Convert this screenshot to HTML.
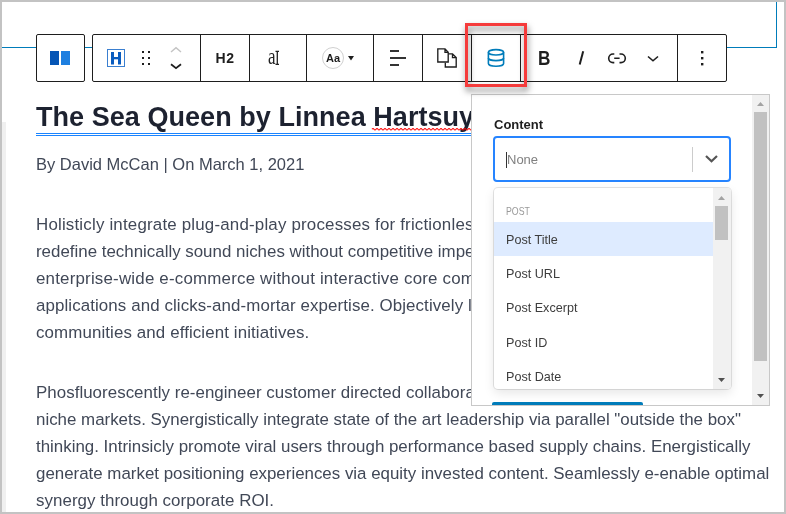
<!DOCTYPE html>
<html><head><meta charset="utf-8">
<style>
*{margin:0;padding:0;box-sizing:border-box}
html,body{width:786px;height:514px;overflow:hidden;background:#fff}
body{position:relative;font-family:"Liberation Sans",sans-serif;-webkit-font-smoothing:antialiased}
body{will-change:transform}
.a{position:absolute}
#frame{left:0;top:0;width:786px;height:514px;border:2px solid #c3c3c3;z-index:50;pointer-events:none}
#strip{left:2px;top:122px;width:4px;height:390px;background:#f0f0f0}
#bl1{left:2px;top:47px;width:775px;height:1px;background:#007cba}
#bl2{left:776px;top:2px;width:1px;height:46px;background:#007cba}
.tb{background:#fff;border:1px solid #1e1e1e;border-radius:2px;height:48px;top:34px}
.sep{top:34px;width:1px;height:48px;background:#1e1e1e}
.lb{left:12px;font-size:12.6px;line-height:18px;color:#3d3d3d;white-space:nowrap}
.txt{white-space:nowrap;color:#414857}
</style></head><body>
<div class="a" id="frame"></div>
<div class="a" id="strip"></div>
<div class="a" id="bl1"></div>
<div class="a" id="bl2"></div>

<!-- toolbar -->
<div class="a tb" style="left:36px;width:49px"></div>
<div class="a tb" style="left:92px;width:635px"></div>
<div class="a sep" style="left:200px"></div>
<div class="a sep" style="left:249px"></div>
<div class="a sep" style="left:306px"></div>
<div class="a sep" style="left:373px"></div>
<div class="a sep" style="left:422px"></div>
<div class="a sep" style="left:471px"></div>
<div class="a sep" style="left:520px"></div>
<div class="a sep" style="left:677px"></div>


<!-- toolbar icons -->
<div class="a" style="left:50px;top:51px;width:9px;height:14px;background:#0555b5"></div>
<div class="a" style="left:61px;top:51px;width:9px;height:14px;background:#1e7fe0"></div>
<svg class="a" style="left:100px;top:40px" width="100" height="36" viewBox="100 40 100 36">
 <rect x="107.5" y="49.5" width="17" height="17" fill="none" stroke="#3a7fd0" stroke-width="1"/>
 <rect x="111" y="52" width="3" height="12.5" fill="#0a5cbf"/>
 <rect x="118" y="52" width="3" height="12.5" fill="#0a5cbf"/>
 <rect x="113" y="57" width="6" height="2.3" fill="#0a5cbf"/>
 <g fill="#1e1e1e">
 <rect x="142" y="51" width="2" height="2"/><rect x="148" y="51" width="2" height="2"/>
 <rect x="142" y="57" width="2" height="2"/><rect x="148" y="57" width="2" height="2"/>
 <rect x="142" y="63" width="2" height="2"/><rect x="148" y="63" width="2" height="2"/>
 </g>
 <path d="M171 52 L176 47.8 L181 52" fill="none" stroke="#c4c4c4" stroke-width="1.5"/>
 <path d="M171 64.2 L176 68.1 L181 64.2" fill="none" stroke="#1e1e1e" stroke-width="1.8"/>
</svg>
<div class="a" style="left:201px;top:34px;width:48px;height:48px;line-height:48px;text-align:center;font-weight:bold;font-size:14px;letter-spacing:.6px;color:#1e1e1e">H2</div>
<div class="a" style="left:268px;top:43px;font-family:'Liberation Serif',serif;font-size:23px;line-height:28px;color:#222;transform:scaleX(.74);transform-origin:0 0">a</div>
<svg class="a" style="left:270px;top:48px" width="14" height="20" viewBox="270 48 14 20">
 <path d="M275.5 51.3 H279 M277.3 51.3 V64.3 M275.5 64.3 H279" fill="none" stroke="#222" stroke-width="1.3"/>
</svg>
<svg class="a" style="left:315px;top:40px" width="50" height="36" viewBox="315 40 50 36">
 <circle cx="333" cy="58" r="10.5" fill="none" stroke="#d0d0d0" stroke-width="1"/>
 <path d="M348 56 H354 L351 60.5 Z" fill="#1e1e1e"/>
</svg>
<div class="a" style="left:313px;top:46px;width:40px;text-align:center;font-weight:bold;font-size:11px;line-height:24px;color:#1e1e1e">Aa</div>
<svg class="a" style="left:380px;top:40px" width="90" height="36" viewBox="380 40 90 36">
 <g fill="#333"><rect x="390" y="50" width="9" height="2"/><rect x="390" y="57" width="16" height="2"/><rect x="390" y="64" width="9" height="2"/></g>
 <path d="M437.8 48.8 H445 L448.2 52.3 V62 H437.8 Z M445 48.8 V52.3 H448.2" fill="none" stroke="#1e1e1e" stroke-width="1.35" stroke-linejoin="miter"/>
 <path d="M448.2 53.9 H452.5 L456.2 57.6 V67 H445.3 V62.8 M452.5 53.9 V57.6 H456.2" fill="none" stroke="#1e1e1e" stroke-width="1.35"/>
</svg>
<svg class="a" style="left:480px;top:40px" width="40" height="36" viewBox="480 40 40 36">
 <g fill="none" stroke="#007cba" stroke-width="1.6">
 <ellipse cx="496" cy="52.3" rx="7.6" ry="2.7"/>
 <path d="M488.4 52.3 V63.6 A7.6 2.7 0 0 0 503.6 63.6 V52.3"/>
 <path d="M488.4 57.9 A7.6 2.7 0 0 0 503.6 57.9"/>
 </g>
</svg>
<div class="a" style="left:538px;top:44px;font-weight:bold;font-size:20px;line-height:28px;color:#1e1e1e;transform:scaleX(.86);transform-origin:0 0">B</div>
<svg class="a" style="left:570px;top:40px" width="150" height="36" viewBox="570 40 150 36">
 <path d="M583.2 51.3 L579.7 64.5" fill="none" stroke="#1e1e1e" stroke-width="2"/>
 <path d="M614.3 54 H613 A4.3 4.3 0 0 0 613 62.6 H614.3 M619.5 54 H621 A4.3 4.3 0 0 1 621 62.6 H619.5 M614.2 58.3 H619.6" fill="none" stroke="#1e1e1e" stroke-width="1.6"/>
 <path d="M648 56.5 L653 60.8 L658 56.5" fill="none" stroke="#1e1e1e" stroke-width="1.6"/>
 <g fill="#1e1e1e"><rect x="701" y="51" width="2.4" height="2.4"/><rect x="701" y="57" width="2.4" height="2.4"/><rect x="701" y="63" width="2.4" height="2.4"/></g>
</svg>

<!-- title -->
<div class="a txt" id="title" style="left:36px;top:99px;font-size:27px;letter-spacing:.05px;font-weight:bold;color:#1d2230;line-height:36px">The Sea Queen by Linnea Hartsuyker</div>
<svg class="a" style="left:0;top:0" width="786" height="140"><path d="M372 129.2 q1 -1.5 2 0 t2 0 t2 0 t2 0 t2 0 t2 0 t2 0 t2 0 t2 0 t2 0 t2 0 t2 0 t2 0 t2 0 t2 0 t2 0 t2 0 t2 0 t2 0 t2 0 t2 0 t2 0 t2 0 t2 0 t2 0 t2 0 t2 0 t2 0 t2 0 t2 0 t2 0 t2 0 t2 0 t2 0 t2 0 t2 0 t2 0 t2 0 t2 0 t2 0 t2 0 t2 0 t2 0 t2 0 t2 0 t2 0 t2 0 t2 0 t2 0 t2 0 t2 0 t2 0 t2 0 t2 0 t2 0 t2 0" fill="none" stroke="#f00" stroke-width="1.1"/></svg>
<div class="a" style="left:36px;top:133px;width:440px;height:1px;background:#1a84ff"></div>
<div class="a" style="left:36px;top:135px;width:440px;height:1px;background:#1a84ff"></div>

<div class="a txt" id="byline" style="left:36px;top:152px;font-size:16.5px;line-height:24px">By David McCan | On March 1, 2021</div>

<div class="a txt" style="left:36px;top:211px;font-size:16.9px;line-height:27px">
<div style="letter-spacing:.19px">Holisticly integrate plug-and-play processes for frictionless solutions. Dynamically</div>
<div>redefine technically sound niches without competitive imperatives. Completely leverage</div>
<div style="letter-spacing:.2px">enterprise-wide e-commerce without interactive core competencies. Seamlessly syndicate</div>
<div style="letter-spacing:.1px">applications and clicks-and-mortar expertise. Objectively leverage existing viral</div>
<div style="letter-spacing:.11px">communities and efficient initiatives.</div>
</div>

<div class="a txt" style="left:36px;top:379px;font-size:16.9px;line-height:27px">
<div style="letter-spacing:.04px">Phosfluorescently re-engineer customer directed collaboration and idea-sharing for</div>
<div>niche markets. Synergistically integrate state of the art leadership via parallel "outside the box"</div>
<div>thinking. Intrinsicly promote viral users through performance based supply chains. Energistically</div>
<div>generate market positioning experiences via equity invested content. Seamlessly e-enable optimal</div>
<div style="letter-spacing:.05px">synergy through corporate ROI.</div>
</div>


<!-- popover -->
<div class="a" id="pop" style="left:471px;top:94px;width:299px;height:312px;border:1px solid #c8c8c8;background:#fff;z-index:10;overflow:hidden">
 <div class="a" style="left:22px;top:21px;font-weight:bold;font-size:13px;line-height:18px;color:#1e1e1e">Content</div>
 <div class="a" style="left:21px;top:41px;width:238px;height:46px;border:2px solid #2684ff;border-radius:4px"></div>
 <div class="a" style="left:34px;top:57px;width:1px;height:16px;background:#333"></div>
 <div class="a" style="left:35px;top:56px;font-size:13px;line-height:18px;color:#808080">None</div>
 <div class="a" style="left:220px;top:52px;width:1px;height:25px;background:#ccc"></div>
 <svg class="a" style="left:230px;top:58px" width="20" height="12" viewBox="0 0 20 12"><path d="M4 3 L9.5 8.3 L15 3" fill="none" stroke="#555" stroke-width="2.2"/></svg>
 <!-- listbox -->
 <div class="a" style="left:22px;top:93px;width:237px;height:201px;border-radius:4px;box-shadow:0 0 0 1px rgba(0,0,0,.1),0 4px 11px rgba(0,0,0,.1);background:#fff;overflow:hidden">
  <div class="a" style="left:12px;top:18px;font-size:10.2px;line-height:12px;color:#999;transform:scaleX(.86);transform-origin:0 0">POST</div>
  <div class="a" style="left:0;top:34px;width:220px;height:34px;background:#deebff"></div>
  <div class="a lb" style="top:43px">Post Title</div>
  <div class="a lb" style="top:77px">Post URL</div>
  <div class="a lb" style="top:111px">Post Excerpt</div>
  <div class="a lb" style="top:146px">Post ID</div>
  <div class="a lb" style="top:180px">Post Date</div>
  <div class="a" style="left:219px;top:0;width:18px;height:201px;background:#f1f1f1"></div>
  <div class="a" style="left:221px;top:18px;width:13px;height:34px;background:#c1c1c1"></div>
  <svg class="a" style="left:219px;top:0" width="18" height="201" viewBox="0 0 18 201"><path d="M5 12 H12 L8.5 8 Z" fill="#a3a3a3"/><path d="M5 190 H12 L8.5 194 Z" fill="#505050"/></svg>
 </div>
 <div class="a" style="left:20px;top:307px;width:151px;height:10px;background:#007cba;border-radius:2px"></div>
 <!-- popover scrollbar -->
 <div class="a" style="left:280px;top:0;width:18px;height:310px;background:#f1f1f1"></div>
 <div class="a" style="left:282px;top:17px;width:13px;height:249px;background:#c1c1c1"></div>
 <svg class="a" style="left:280px;top:0" width="18" height="310" viewBox="0 0 18 310"><path d="M5 11 H12 L8.5 7 Z" fill="#a3a3a3"/><path d="M5 299 H12 L8.5 303 Z" fill="#505050"/></svg>
</div>

<!-- red highlight -->
<div class="a" style="left:465px;top:23px;width:62px;height:64px;border:3px solid #f53b3b;z-index:20;filter:drop-shadow(1px 4px 3px rgba(0,0,0,.5))"></div>

</body></html>
